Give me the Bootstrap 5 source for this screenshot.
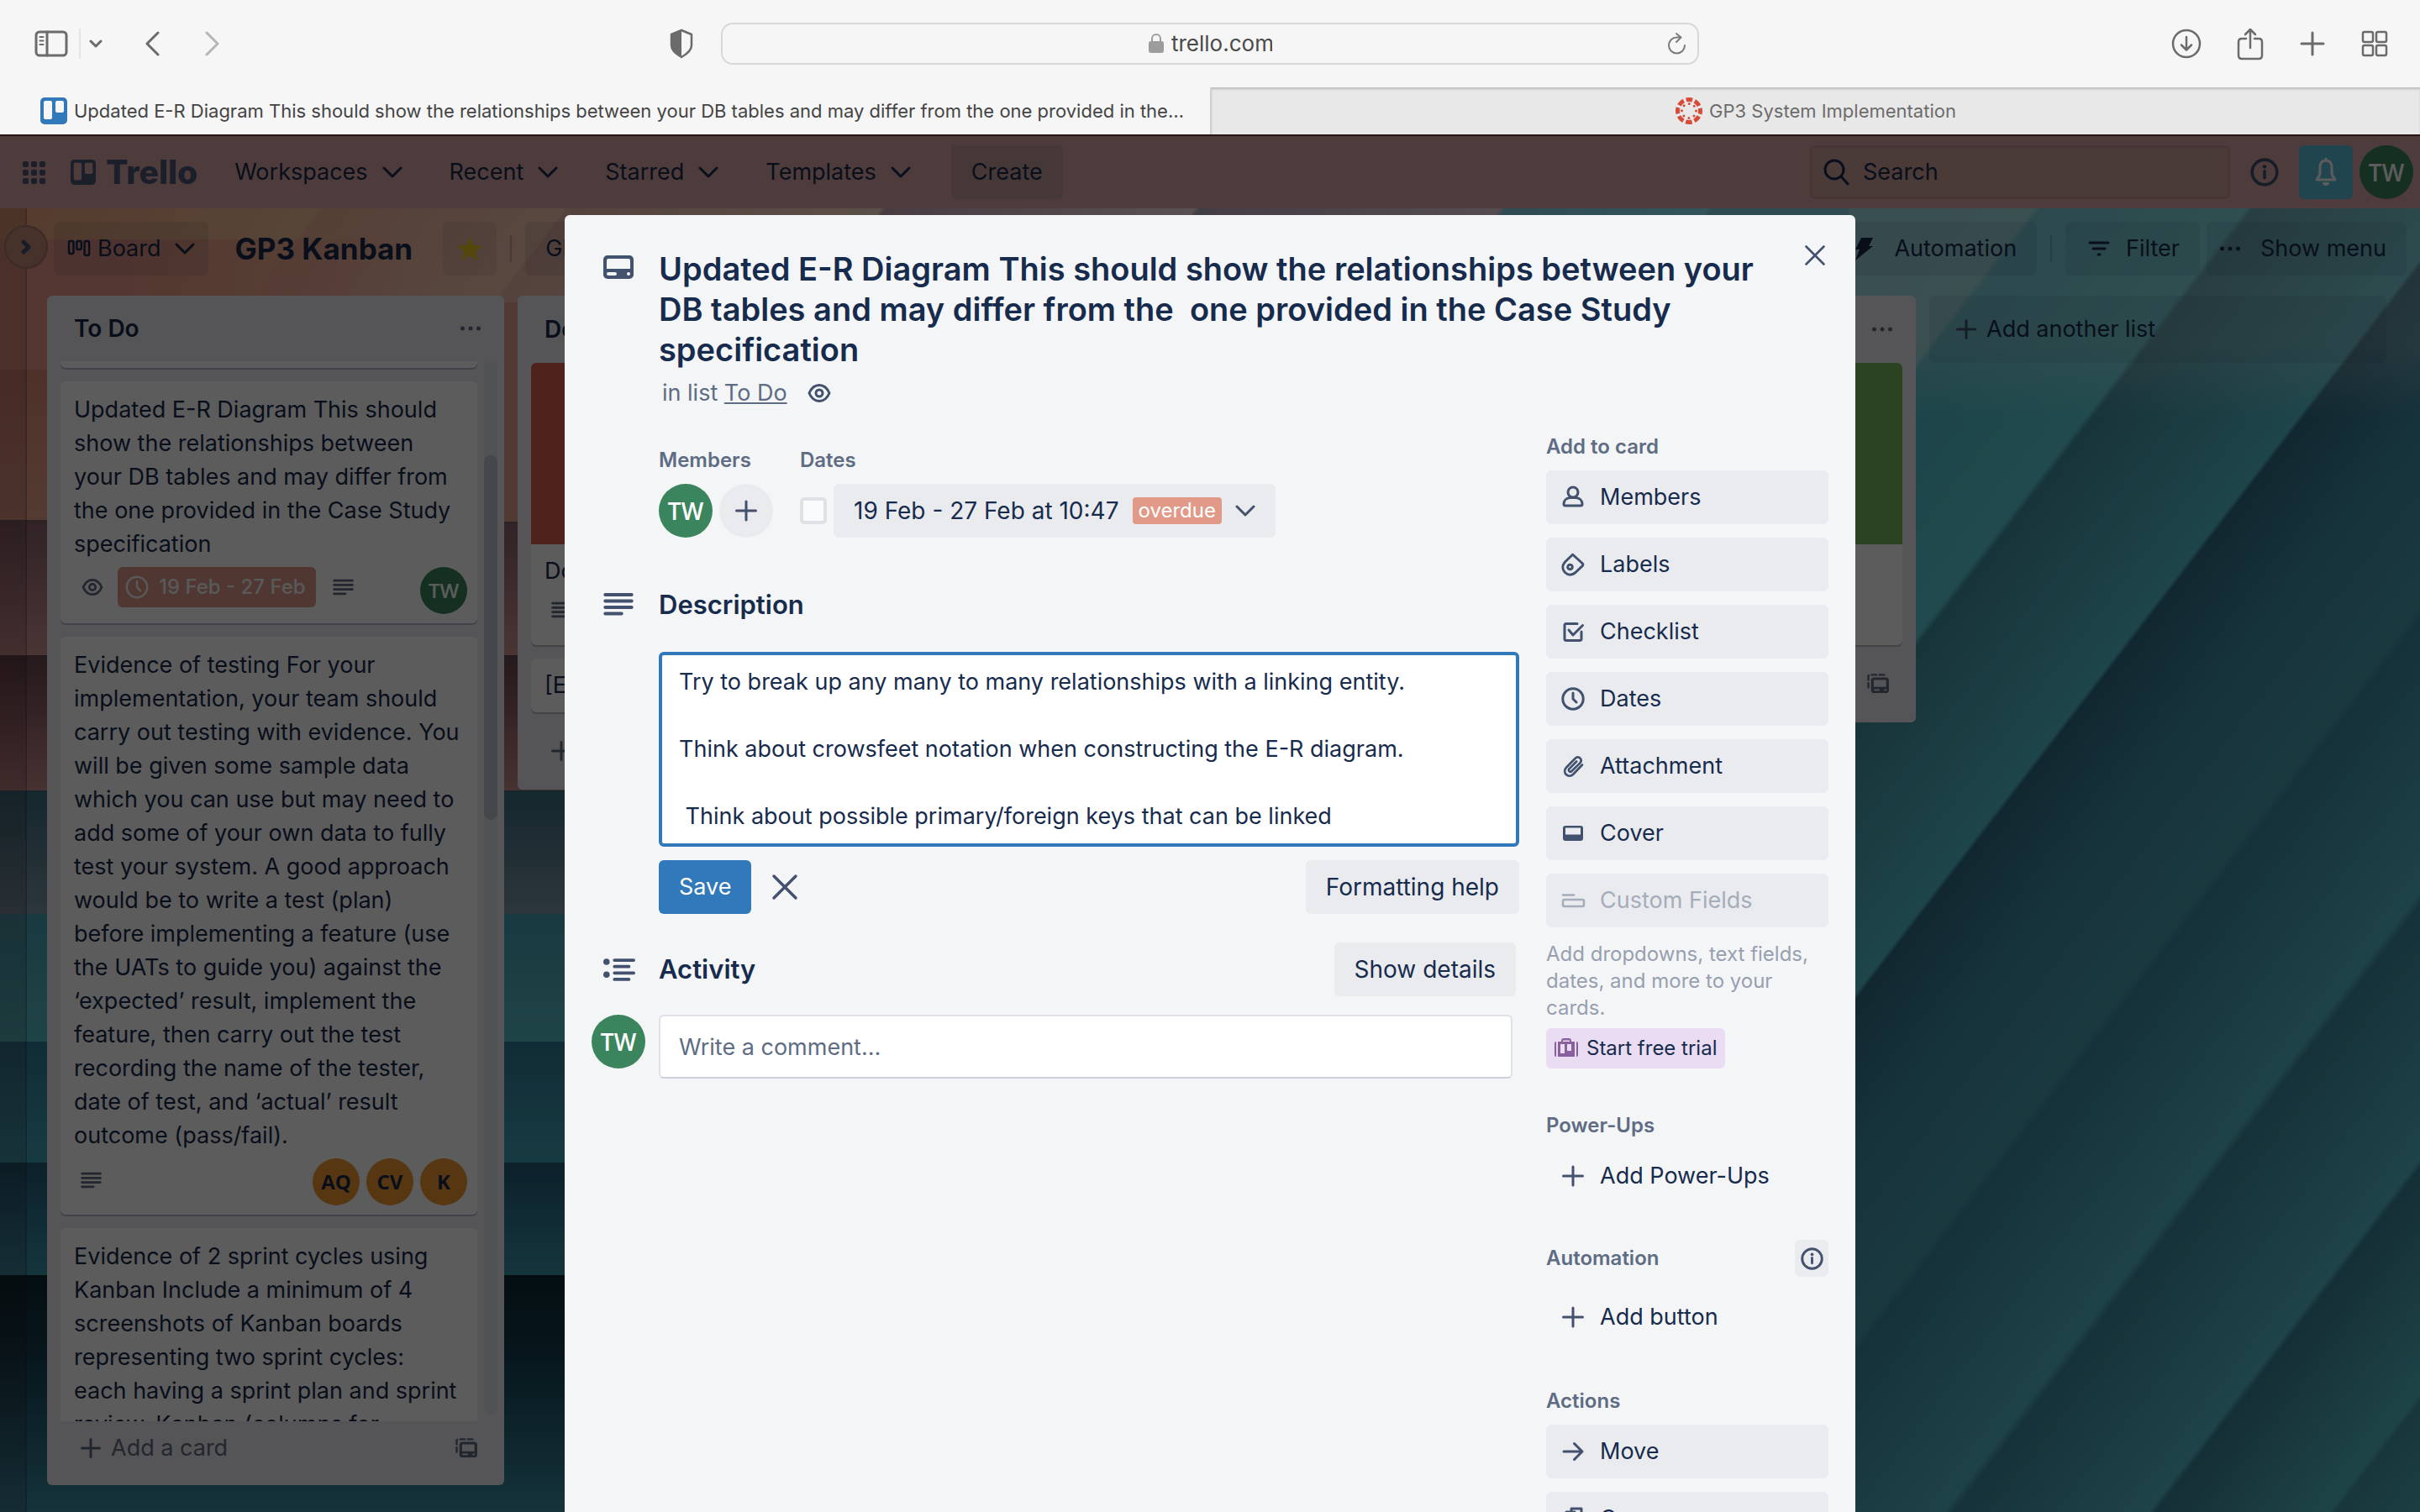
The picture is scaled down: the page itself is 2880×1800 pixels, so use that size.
<!DOCTYPE html>
<html lang="en">
<head>
<meta charset="utf-8">
<meta name="viewport" content="width=device-width, initial-scale=1">
<title>GP3 Kanban | Trello</title>
<link href="https://cdn.jsdelivr.net/npm/bootstrap@5.3.0/dist/css/bootstrap.min.css" rel="stylesheet">
<style>
  :root { --ink:#172b4d; --slate:#42526e; --muted:#5e6c84; --soft:#eaebef; --blue:#3179ba; }
  body { font-family:Inter,"Liberation Sans",sans-serif; font-size:27px; line-height:40px; color:var(--ink); }
  svg { display:block; flex:none; fill:none; stroke:currentColor; stroke-width:3; stroke-linecap:round; stroke-linejoin:round; }
  svg.solid, .solid { fill:currentColor; stroke:none; }
  svg.thin { stroke-width:2.5; }
  svg.bold { stroke-width:5; }
  button, input, textarea { font:inherit; color:inherit; border:0; background:none; padding:0; }
  input:focus, textarea:focus { outline:0; }
  a { color:inherit; text-decoration:none; }

  /* browser window */
  .chrome { background:#f6f6f6; color:#6b6b6b; }
  .toolbar-grid { display:grid; grid-template-columns:858fr 1164fr 858fr; height:104px; align-items:center; }
  .tools-left { padding-left:41px; }
  .tools-right { padding-right:36px; }
  .sep { width:2px; height:36px; background:#e4e4e4; margin:0 10px 0 13px; }
  .nav-back { margin-left:50px; }
  .nav-next { margin-left:54px; color:#b5b5b5; }
  .address { height:50px; border:2px solid #d8d8d8; border-radius:14px; color:#4a4a4a; font-size:26px; }
  .address input { width:120px; }
  .tabstrip { height:56px; font-size:22px; line-height:32px; }
  .tabstrip a { height:56px; min-width:0; white-space:nowrap; }
  .tab-on { color:#444; padding-left:48px; }
  .tab-off { background:#e8e8e8; color:#6c6c6c; border-left:2px solid #cfcfcf; box-shadow:inset 0 3px 3px -1px #b9b9b9; }
  .canvas-red { color:#d84a38; }

  /* app */
  .app { min-height:0; }
  .wallpaper { position:absolute; inset:0; width:100%; height:100%; stroke:none; }
  .topbar { height:88px; background:#d6a7a4; border-top:2px solid #6a4538; }
  .topmenu { gap:32px; }
  .topmenu button { height:64px; padding:0 12px; gap:17px; }
  .create { height:64px; margin-left:36px; }
  .wordmark { font-weight:800; font-size:39px; color:#495673; line-height:40px; }
  .tint { background:rgba(9,30,66,.08); border-radius:6px; }
  .search { width:500px; height:64px; border:3px solid rgba(9,30,66,.08); border-radius:6px; background:rgba(60,60,20,.06); }
  .bell { width:64px; height:64px; background:#5bc0dc; border-radius:6px; color:#fff; }
  .avatar { width:64px; height:64px; border-radius:50%; background:#3a855d; color:#fff; font-family:"Open Sans",sans-serif; font-weight:600; font-size:28px; display:flex; align-items:center; justify-content:center; flex:none; }
  .avatar.tiny { width:56px; height:56px; font-size:24px; }
  .avatar.amber { background:#f2982f; color:var(--ink); font-weight:700; }
  .rail { width:32px; border-right:2px solid rgba(9,30,66,.2); background:rgba(60,10,10,.14); flex:none; }
  .rail-btn { position:absolute; left:5px; top:20px; width:52px; height:52px; border-radius:50%; background:#c48877; border:2px solid #a7756a; color:var(--slate); }
  .board-name { font-size:35px; font-weight:700; line-height:48px; }
  .bbtn { height:64px; }
  .bar { width:2px; height:32px; background:rgba(9,30,66,.2); }
  .list-col { width:544px; background:#ebecf0; border-radius:6px; flex:none; }
  .list-head { height:80px; padding:0 28px 0 32px; font-weight:600; font-size:28px; }
  .list-body { padding:0 16px; gap:16px; }
  .scroll-cards { width:496px; }
  .tcard { background:#fff; border-radius:6px; box-shadow:0 2px 0 rgba(9,30,66,.25); padding:14px 16px 0; }
  .tcard.short { height:64px; padding-top:12px; }
  .tcard.covered { height:336px; padding:0; }
  .covered-text { padding:12px 16px 0; }
  .tstub { height:8px; background:#fff; border-radius:0 0 6px 6px; box-shadow:0 2px 0 rgba(9,30,66,.25); }
  .badges { height:74px; padding-top:7px; margin-right:-4px; }
  .due { height:48px; border-radius:6px; background:#df988a; color:#f4f5f7; padding:0 12px 0 9px; font-size:24px; gap:12px; font-weight:500; }
  .faint { color:var(--muted); }
  .track { width:16px; border-radius:8px; background:#e1e3e8; margin-bottom:8px; padding-top:112px; }
  .thumb { height:434px; border-radius:8px; background:#c1c6d0; }
  .list-foot { height:76px; padding:0 32px 12px 40px; }
  .list-foot.tall { height:92px; padding-bottom:0; }
  .plus-gap { gap:12px; }
  .add-list { height:80px; margin-right:40px; }
  .cover { height:216px; border-radius:6px 6px 0 0; }
  .cover.red { background:#d4614b; }
  .cover.green { background:#7bbb60; }

  /* card dialog */
  .shade { position:absolute; inset:0; background:rgba(0,0,0,.64); overflow:hidden; }
  .card-dialog { width:1536px; min-height:100%; margin:96px auto 0; background:#f4f5f7; border-radius:6px; padding:40px 32px 0 40px; position:relative; }
  .dlg-close { position:absolute; right:34px; top:34px; color:var(--slate); }
  .dlg-title { font-size:38px; line-height:48px; font-weight:600; white-space:pre-wrap; margin:0; padding-right:84px; }
  .lead-col { width:72px; flex:none; padding-left:6px; color:var(--slate); }
  .indent { margin-left:72px; }
  .slate { color:var(--slate); }
  .sub { font-size:24px; font-weight:600; color:var(--muted); line-height:40px; margin:0 0 8px; }
  .h-mod { font-size:31px; line-height:40px; font-weight:600; margin:0; }
  .main-col { padding-top:40px; }
  .mod-head { height:64px; }
  .activity-head { margin-top:34px; padding-right:4px; }
  .comment-row { margin:22px 8px 0 -8px; gap:16px; }
  .soft { background:var(--soft); border-radius:6px; height:64px; padding:0 24px; font-size:28px; }
  .add-round { width:64px; height:64px; border-radius:50%; background:var(--soft); }
  .tick { appearance:none; width:32px; height:32px; background:#fafbfc; border:4px solid #dfe1e6; border-radius:5px; margin:0; }
  .overdue { background:#e19a88; color:#fff; font-size:24px; line-height:32px; padding:0 7px; border-radius:4px; }
  .desc { display:block; width:100%; height:232px; border:4px solid var(--blue); border-radius:6px; background:#fff; padding:12px 20px; resize:none; overflow:hidden; }
  .save { background:var(--blue); color:#fff; height:64px; padding:0 24px; border-radius:6px; }
  .comment { height:76px; background:#fff; border:2px solid #dfe1e6; border-bottom-color:#cdd1dc; border-radius:6px; padding:0 22px; width:100%; }
  .comment::placeholder { color:var(--muted); opacity:1; }
  .side { width:336px; margin-left:32px; flex:none; padding-top:24px; }
  .side-btn { height:64px; width:100%; border-radius:6px; background:var(--soft); padding:0 16px; gap:16px; margin-bottom:16px; text-align:left; }
  .side-btn svg { color:var(--slate); }
  .side-btn.plain { background:none; }
  .side-btn:disabled { color:#a5adba; }
  .side-btn:disabled svg { color:#a5adba; }
  .side-row { margin:44px 0 16px; }
  .hint { font-size:24px; line-height:32px; color:#97a0af; margin:0 0 8px; }
  .trial { height:48px; background:#eadcf2; border-radius:6px; font-size:24px; padding:0 10px; gap:10px; }
  .trial svg { color:#89609e; }
  .info-btn { width:40px; height:44px; background:var(--soft); border-radius:6px; color:var(--slate); }
</style>
</head>
<body class="vh-100 overflow-hidden d-flex flex-column">

<svg width="0" height="0" class="position-absolute" aria-hidden="true">
  <symbol id="chev" viewBox="0 0 24 16"><path d="M2 3l10 10L22 3"/></symbol>
  <symbol id="plus" viewBox="0 0 48 48"><path d="M24 13v22M12.500 24h23"/></symbol>
  <symbol id="add" viewBox="0 0 24 24"><path d="M12 1.500v21M1.500 12h21"/></symbol>
  <symbol id="cross" viewBox="0 0 32 32"><path d="M4 4l24 24M28 4L4 28"/></symbol>
  <symbol id="dots" viewBox="0 0 24 8"><g class="solid"><circle cx="2.500" cy="4" r="2.500"/><circle cx="12" cy="4" r="2.500"/><circle cx="21.500" cy="4" r="2.500"/></g></symbol>
  <symbol id="lines" viewBox="0 0 24 20"><path stroke-width="2.600" d="M1.500 2h21M1.500 7h21M1.500 12h21M1.500 17h13"/></symbol>
  <symbol id="eye" viewBox="0 0 28 24"><path d="M2 12C5 5 9 2.500 14 2.500S23 5 26 12c-3 7-7 9.500-12 9.500S5 19 2 12z"/><circle cx="14" cy="12" r="4"/></symbol>
  <symbol id="clock" viewBox="0 0 28 28"><circle cx="14" cy="14" r="12.200"/><path d="M14 7v7l4 4"/></symbol>
  <symbol id="info" viewBox="0 0 28 28"><circle cx="14" cy="14" r="12.200"/><path d="M14 13v6.500"/><circle cx="14" cy="8.600" r="1.900" class="solid"/></symbol>
  <symbol id="cardy" viewBox="0 0 36 28"><path class="solid" fill-rule="evenodd" d="M5 0h26a5 5 0 0 1 5 5v18a5 5 0 0 1-5 5H5a5 5 0 0 1-5-5V5a5 5 0 0 1 5-5zM6 4Q4 4 4 6v10h28V6q0-2-2-2zM6 20a2 2 0 0 0 0 4h8a2 2 0 0 0 0-4zM30 20a2 2 0 0 0 0 4a2 2 0 0 0 0-4z"/></symbol>
  <symbol id="tmpl" viewBox="0 0 28 26"><path stroke-width="2.600" stroke-dasharray="6 4" d="M1.500 18V4Q1.500 1.500 4 1.500H24"/><path class="solid" fill-rule="evenodd" d="M9 5h15a4 4 0 0 1 4 4v12a4 4 0 0 1-4 4H9a4 4 0 0 1-4-4V9a4 4 0 0 1 4-4zM8.500 8v9h16V8zM9 20v2h7v-2zM22 20v2h3v-2z"/></symbol>
  <symbol id="logo" viewBox="0 0 32 32"><path class="solid" fill-rule="evenodd" d="M5 0h22a5 5 0 0 1 5 5v22a5 5 0 0 1-5 5H5a5 5 0 0 1-5-5V5a5 5 0 0 1 5-5zM6 4q-2 0-2 2v18q0 2 2 2h6q2 0 2-2V6q0-2-2-2zM20 4q-2 0-2 2v10q0 2 2 2h6q2 0 2-2V6q0-2-2-2z"/></symbol>
</svg>

<!-- browser window -->
<header class="chrome">
  <div class="toolbar-grid">
    <div class="d-flex align-items-center tools-left">
      <button aria-label="Sidebar"><svg width="40" height="32" viewBox="0 0 40 32"><rect x="2" y="2" width="36" height="28" rx="4"/><path d="M15 2v28"/><path stroke-width="2" d="M6.500 8h4M6.500 12.500h4M6.500 17h4"/></svg></button>
      <span class="sep"></span>
      <button aria-label="Tab groups"><svg width="16" height="12" viewBox="0 0 16 12"><path d="M2 3l6 6 6-6"/></svg></button>
      <button class="nav-back" aria-label="Back"><svg width="18" height="32" viewBox="0 0 18 32"><path d="M16 3L3 16l13 13"/></svg></button>
      <button class="nav-next" aria-label="Forward"><svg width="18" height="32" viewBox="0 0 18 32"><path d="M2 3l13 13L2 29"/></svg></button>
      <button class="ms-auto me-4 pe-2" aria-label="Privacy report"><svg width="30" height="36" viewBox="0 0 30 36"><path stroke-width="2.500" d="M15 2l12 5v13c0 6-5 10-12 14C8 30 3 26 3 20V7z"/><path class="solid" d="M15 2v32C8 30 3 26 3 20V7z"/></svg></button>
    </div>
    <form class="address d-flex align-items-center position-relative justify-content-center">
      <svg class="solid me-2" width="20" height="26" viewBox="0 0 20 26" style="color:#9c9c9c"><rect x="1" y="10" width="18" height="14" rx="3"/><path fill="none" stroke="#9c9c9c" stroke-width="2" d="M5 11V7a5 5 0 0 1 10 0v4"/></svg>
      <input value="trello.com" aria-label="Address">
      <button type="button" class="position-absolute end-0 me-2 pe-1" aria-label="Reload"><svg width="24" height="28" viewBox="0 0 24 28"><path stroke="#7b7b7b" stroke-width="2" d="M21 16a9.500 9.500 0 1 1-9.500-9.500H16M11 2l5.500 4.500L11 12"/></svg></button>
    </form>
    <div class="d-flex align-items-center justify-content-end tools-right">
      <button aria-label="Downloads"><svg class="thin" width="36" height="36" viewBox="0 0 36 36"><circle cx="18" cy="18" r="16"/><path d="M18 10v15M12 19.500l6 6 6-6"/></svg></button>
      <button class="ms-4 ps-3" aria-label="Share"><svg class="thin" width="36" height="40" viewBox="0 0 36 40"><path d="M13 14H8q-4 0-4 4v16q0 4 4 4h20q4 0 4-4V18q0-4-4-4h-5M18 25V4M12 9l6-6 6 6"/></svg></button>
      <button class="ms-4 ps-3" aria-label="New tab"><svg width="32" height="32" viewBox="0 0 32 32"><path d="M16 3v26M3 16h26"/></svg></button>
      <button class="ms-4 ps-3" aria-label="Tab overview"><svg class="thin" width="36" height="34" viewBox="0 0 36 34"><rect x="4" y="3" width="12" height="12" rx="2"/><rect x="20" y="3" width="12" height="12" rx="2"/><rect x="4" y="19" width="12" height="12" rx="2"/><rect x="20" y="19" width="12" height="12" rx="2"/></svg></button>
    </div>
  </div>
  <nav class="tabstrip d-flex">
    <a href="#" class="tab-on w-50 d-flex align-items-center"><svg width="32" height="32" style="color:#3179ba" class="me-2"><use href="#logo"/></svg><span>Updated E-R Diagram This should show the relationships between your DB tables and may differ from the one provided in the…</span></a>
    <a href="#" class="tab-off w-50 d-flex align-items-center justify-content-center"><svg width="32" height="32" viewBox="0 0 32 32" class="me-2 canvas-red"><circle cx="16" cy="16" r="13.500" stroke-width="5" stroke-dasharray="7.600 3" stroke-dashoffset="3.800" stroke-linecap="butt"/><circle cx="16" cy="16" r="8.500" stroke-width="3" stroke-dasharray="0 6.676"/></svg><span>GP3 System Implementation</span></a>
  </nav>
</header>

<div class="app flex-grow-1 position-relative d-flex flex-column overflow-hidden">
  <!-- canyon wallpaper: slanted walls with flat strata on the left -->
  <svg class="wallpaper" viewBox="0 160 2880 1640" preserveAspectRatio="xMinYMin slice" aria-hidden="true">
    <defs>
      <linearGradient id="walls" gradientUnits="userSpaceOnUse" x1="0" y1="0" x2="2696" y2="2071">
        <stop offset=".04" stop-color="#e9a17a"/><stop offset=".133" stop-color="#f2c09c"/><stop offset=".1345" stop-color="#ecb096"/>
        <stop offset=".2012" stop-color="#f4c8b0"/><stop offset=".2022" stop-color="#e8b6a8"/><stop offset=".289" stop-color="#fbdcc8"/>
        <stop offset=".2905" stop-color="#c8a7b7"/><stop offset=".376" stop-color="#f4dee4"/><stop offset=".3775" stop-color="#b7acbd"/>
        <stop offset=".461" stop-color="#e9d3de"/><stop offset=".4625" stop-color="#85cee4"/><stop offset=".5185" stop-color="#8be9fa"/>
        <stop offset=".52" stop-color="#80d0de"/><stop offset=".609" stop-color="#88d2d8"/>
        <stop offset=".611" stop-color="#50bcc8"/><stop offset=".668" stop-color="#5aced6"/>
        <stop offset=".67" stop-color="#42909f"/><stop offset=".727" stop-color="#53c0cc"/>
        <stop offset=".7285" stop-color="#316e84"/><stop offset=".76" stop-color="#3e8aa2"/><stop offset=".801" stop-color="#4a9fb0"/>
        <stop offset=".804" stop-color="#3c88a0"/><stop offset=".862" stop-color="#53b8c4"/>
        <stop offset=".865" stop-color="#3f8a9e"/><stop offset=".919" stop-color="#53baca"/>
        <stop offset=".921" stop-color="#3b8294"/><stop offset=".969" stop-color="#53bcc6"/>
        <stop offset=".971" stop-color="#4396a6"/><stop offset="1" stop-color="#4eb4be"/>
      </linearGradient>
      <linearGradient id="strata" x1="0" y1="0" x2="0" y2="1">
        <stop offset="0" stop-color="#d88a74"/><stop offset=".1316" stop-color="#e8a48c"/>
        <stop offset=".1316" stop-color="#84606a"/><stop offset=".25" stop-color="#cf9494"/>
        <stop offset=".25" stop-color="#684650"/><stop offset=".3684" stop-color="#c68a8a"/>
        <stop offset=".3684" stop-color="#3a6e7e"/><stop offset=".4765" stop-color="#7c96a8"/>
        <stop offset=".4765" stop-color="#46a0b0"/><stop offset=".5882" stop-color="#56bcc6"/>
        <stop offset=".5882" stop-color="#307a94"/><stop offset=".6941" stop-color="#42a4b8"/>
        <stop offset=".6941" stop-color="#225a74"/><stop offset=".7926" stop-color="#3c94aa"/>
        <stop offset=".7926" stop-color="#0b2830"/><stop offset=".86" stop-color="#143e4e"/><stop offset="1" stop-color="#3c8ea6"/>
      </linearGradient>
      <linearGradient id="blush" x1="0" y1="0" x2="1" y2="0"><stop offset=".3" stop-color="#e89a88"/><stop offset="1" stop-color="#e89a88" stop-opacity="0"/></linearGradient>
      <linearGradient id="haze" x1="0" y1="0" x2="0" y2="1"><stop offset=".65" stop-color="#fff" stop-opacity=".24"/><stop offset="1" stop-color="#fff" stop-opacity="0"/></linearGradient>
    </defs>
    <rect x="0" y="160" width="2880" height="1640" fill="url(#walls)"/>
    <path d="M0 285H500V440H0z" fill="url(#blush)"/>
    <rect x="0" y="440" width="700" height="1360" fill="url(#strata)"/>
    <path d="M600 360H700V621H600z" fill="#e4a090"/>
    <rect x="2200" y="248" width="680" height="250" fill="url(#haze)"/>
  </svg>

  <div class="position-relative flex-grow-1 d-flex flex-column app">
    <nav class="topbar d-flex align-items-center ps-4 pe-2 flex-shrink-0">
      <button aria-label="Apps"><svg class="solid" width="32" height="32" viewBox="0 0 32 32" style="color:#495673"><g id="r"><rect x="3" y="3" width="7" height="7" rx="2"/><rect x="13" y="3" width="7" height="7" rx="2"/><rect x="23" y="3" width="7" height="7" rx="2"/></g><use href="#r" y="10"/><use href="#r" y="20"/></svg></button>
      <a href="#" class="d-flex align-items-center gap-2 wordmark ms-4 ps-1 me-4 pe-2"><svg width="30" height="30" class="me-1"><use href="#logo"/></svg>Trello</a>
      <div class="topmenu d-flex">
        <button class="d-flex align-items-center">Workspaces <svg width="24" height="16"><use href="#chev"/></svg></button>
        <button class="d-flex align-items-center">Recent <svg width="24" height="16"><use href="#chev"/></svg></button>
        <button class="d-flex align-items-center">Starred <svg width="24" height="16"><use href="#chev"/></svg></button>
        <button class="d-flex align-items-center">Templates <svg width="24" height="16"><use href="#chev"/></svg></button>
      </div>
      <button class="tint create px-4">Create</button>
      <label class="search d-flex align-items-center ms-auto ps-2"><svg class="ms-1 me-3" width="32" height="32" viewBox="0 0 32 32"><circle cx="14" cy="13" r="11"/><path d="M22 21l8 9"/></svg><input class="w-75" value="Search" aria-label="Search"></label>
      <button class="slate ms-4 me-4" aria-label="Information"><svg width="34" height="34"><use href="#info"/></svg></button>
      <button aria-label="Notifications" class="bell d-flex align-items-center justify-content-center me-2"><svg width="28" height="36" viewBox="0 0 28 36"><path d="M14 4c-5 0-7 4-7 8v7c0 3-2 5-4 8h22c-2-3-4-5-4-8v-7c0-4-2-8-7-8zM14 3V2"/><path class="solid" d="M10 30h8a4 4 0 0 1-8 0z"/></svg></button>
      <span class="avatar">TW</span>
    </nav>

    <div class="d-flex flex-grow-1 position-relative app">
      <div class="rail"></div>
      <button class="rail-btn d-flex align-items-center justify-content-center" aria-label="Open sidebar"><svg class="bold" width="14" height="20" viewBox="0 0 14 20"><path d="M4 4l6 6-6 6"/></svg></button>
      <main class="flex-grow-1 d-flex flex-column" style="min-width:0">
        <div class="d-flex align-items-center pt-3 pe-3 ms-4 ps-2">
          <button class="tint bbtn d-flex align-items-center px-3"><svg width="28" height="24" viewBox="0 0 28 24" class="me-2 thin"><rect x="2" y="3" width="5.500" height="15" rx="2"/><rect x="11.300" y="3" width="5.500" height="10" rx="2"/><rect x="20.600" y="3" width="5.500" height="17" rx="2"/></svg><span class="me-3">Board</span><svg width="24" height="16"><use href="#chev"/></svg></button>
          <h1 class="board-name mb-0 mx-4 px-2">GP3 Kanban</h1>
          <button class="tint bbtn px-3 ms-1" aria-label="Star" style="color:#e8c51c"><svg class="solid" width="32" height="32" viewBox="0 0 32 32"><path d="M16 2l4 10 11 .5-8.500 7L25.500 30 16 24l-9.500 6 3-10.500-8.500-7L12 12z"/></svg></button>
          <span class="bar mx-3"></span>
          <button class="tint bbtn px-4">GP3 Group</button>
          <button class="tint bbtn d-flex align-items-center px-4 ms-auto"><svg class="solid me-4" width="24" height="32" viewBox="0 0 24 32"><path d="M9 3h14l-5 10h5L2 30l5-13H2z"/></svg>Automation</button>
          <span class="bar mx-3"></span>
          <button class="tint bbtn d-flex align-items-center px-4"><svg class="me-3" width="32" height="24" viewBox="0 0 32 24"><path d="M5 5h22M9 12h14M15 19h2"/></svg>Filter</button>
          <button class="tint bbtn d-flex align-items-center ps-3 pe-4 ms-2"><svg class="me-4" width="24" height="8"><use href="#dots"/></svg>Show menu</button>
        </div>

        <div class="d-flex align-items-start flex-grow-1 gap-3 mt-4 ms-4 pb-4 mb-2 app">
          <section class="list-col d-flex flex-column h-100">
            <div class="list-head d-flex align-items-center justify-content-between">To Do <svg class="faint" width="24" height="8"><use href="#dots"/></svg></div>
            <div class="list-body d-flex flex-grow-1 pe-2 gap-2 app">
              <div class="scroll-cards d-flex flex-column gap-3 overflow-hidden">
                <div class="tstub flex-shrink-0"></div>
                <article class="tcard flex-shrink-0">Updated E-R Diagram This should show the relationships between your DB tables and may differ from the one provided in the Case Study specification
                  <div class="badges d-flex align-items-start faint">
                    <div class="d-flex align-items-center"><svg class="ms-2" width="28" height="22"><use href="#eye"/></svg><span class="due d-flex align-items-center ms-3 me-3"><svg class="thin" width="28" height="28"><use href="#clock"/></svg>19 Feb - 27 Feb</span><svg class="ms-1" width="25" height="21"><use href="#lines"/></svg></div>
                    <span class="avatar tiny ms-auto">TW</span>
                  </div>
                </article>
                <article class="tcard flex-shrink-0">Evidence of testing For your implementation, your team should carry out testing with evidence. You will be given some sample data which you can use but may need to add some of your own data to fully test your system. A good approach would be to write a test (plan) before implementing a feature (use the UATs to guide you) against the ‘expected’ result, implement the feature, then carry out the test recording the name of the tester, date of test, and ‘actual’ result outcome (pass/fail).
                  <div class="badges d-flex align-items-start faint">
                    <svg class="mt-3 ms-2" width="25" height="21"><use href="#lines"/></svg>
                    <span class="d-flex gap-2 ms-auto"><span class="avatar tiny amber">AQ</span><span class="avatar tiny amber">CV</span><span class="avatar tiny amber">K</span></span>
                  </div>
                </article>
                <article class="tcard flex-shrink-0">Evidence of 2 sprint cycles using Kanban Include a minimum of 4 screenshots of Kanban boards representing two sprint cycles:<br>each having a sprint plan and sprint review. Kanban (columns for</article>
              </div>
              <div class="track"><div class="thumb"></div></div>
            </div>
            <div class="list-foot d-flex align-items-center faint flex-shrink-0"><button class="d-flex align-items-center plus-gap"><svg width="24" height="24"><use href="#add"/></svg>Add a card</button><svg class="ms-auto" width="26" height="24"><use href="#tmpl"/></svg></div>
          </section>

          <section class="list-col">
            <div class="list-head d-flex align-items-center">Doing</div>
            <div class="list-body d-flex flex-column">
              <article class="tcard covered"><div class="cover red"></div><div class="covered-text">Doing<svg class="faint mt-3 ms-2" width="25" height="21"><use href="#lines"/></svg></div></article>
              <article class="tcard short">[Example task]</article>
            </div>
            <div class="list-foot tall d-flex align-items-center faint plus-gap"><svg width="24" height="24"><use href="#add"/></svg>Add</div>
          </section>
          <section class="list-col"></section>
          <section class="list-col">
            <div class="list-head d-flex align-items-center justify-content-end"><svg class="faint" width="24" height="8"><use href="#dots"/></svg></div>
            <div class="list-body d-flex flex-column"><article class="tcard covered"><div class="cover green"></div></article></div>
            <div class="list-foot tall d-flex align-items-center faint"><svg class="ms-auto" width="26" height="24"><use href="#tmpl"/></svg></div>
          </section>
          <button class="tint add-list d-flex align-items-center ps-4 plus-gap flex-grow-1"><svg class="ms-2 slate" width="24" height="24"><use href="#add"/></svg>Add another list</button>
        </div>
      </main>
    </div>
  </div>

  <!-- open card -->
  <div class="shade">
    <section class="card-dialog" role="dialog" aria-label="Card details">
      <button class="dlg-close" aria-label="Close"><svg width="28" height="28"><use href="#cross"/></svg></button>
      <div class="d-flex">
        <div class="lead-col pt-2"><svg width="36" height="28"><use href="#cardy"/></svg></div>
        <div>
          <h2 class="dlg-title">Updated E-R Diagram This should show the relationships between your DB tables and may differ from the  one provided in the Case Study specification</h2>
          <div class="d-flex align-items-center mt-2 ps-1" style="color:#5e6c84"><span>in list <a href="#" class="text-decoration-underline">To Do</a></span><svg class="slate ms-4" width="28" height="24"><use href="#eye"/></svg></div>
        </div>
      </div>

      <div class="d-flex">
        <div class="main-col flex-grow-1">
          <div class="d-flex indent">
            <div class="me-3 pe-3"><h3 class="sub">Members</h3><div class="d-flex gap-2"><span class="avatar">TW</span><button class="add-round slate d-flex align-items-center justify-content-center" aria-label="Add member"><svg width="48" height="48"><use href="#plus"/></svg></button></div></div>
            <div><h3 class="sub">Dates</h3><div class="d-flex align-items-center gap-2"><input type="checkbox" class="tick" aria-label="Mark complete"><button class="soft d-flex align-items-center"><span class="me-3">19 Feb - 27 Feb at 10:47</span><span class="overdue me-3">overdue</span><svg class="slate" width="24" height="16"><use href="#chev"/></svg></button></div></div>
          </div>

          <div class="mod-head d-flex align-items-center mt-5"><div class="lead-col"><svg width="36" height="30"><use href="#lines"/></svg></div><h3 class="h-mod">Description</h3></div>
          <div class="mt-4 indent">
            <textarea class="desc" aria-label="Description">Try to break up any many to many relationships with a linking entity.

Think about crowsfeet notation when constructing the E-R diagram.

 Think about possible primary/foreign keys that can be linked</textarea>
            <div class="d-flex align-items-center mt-3"><button class="save">Save</button><button class="slate ms-4" aria-label="Cancel"><svg width="32" height="32" viewBox="0 0 32 32"><path d="M3 3l26 26M29 3L3 29" stroke-width="3.500"/></svg></button><button class="soft ms-auto">Formatting help</button></div>
          </div>

          <div class="activity-head d-flex align-items-center"><div class="lead-col"><svg width="38" height="29" viewBox="0 0 40 30"><path stroke-width="4" d="M14 3h24M14 11h18M14 19h24M14 27h18"/><g class="solid"><circle cx="4" cy="5" r="4"/><circle cx="4" cy="21" r="4"/></g></svg></div><h3 class="h-mod">Activity</h3><button class="soft ms-auto">Show details</button></div>
          <div class="comment-row d-flex align-items-start"><span class="avatar">TW</span><input class="comment" placeholder="Write a comment…" aria-label="Write a comment"></div>
        </div>

        <aside class="side">
          <h3 class="sub">Add to card</h3>
          <button class="side-btn d-flex align-items-center"><svg width="32" height="32" viewBox="0 0 32 32"><circle cx="16" cy="10" r="6"/><path d="M5 24c0-4 3-7 7-7.500h8c4 .5 7 3.500 7 7.500q0 2-2 2H7q-2 0-2-2z"/></svg>Members</button>
          <button class="side-btn d-flex align-items-center"><svg width="32" height="32" viewBox="0 0 32 32"><path d="M16 4.500L27.500 15q1 1.200 0 2.400L19 25.500c-4 3.500-9 3.500-12.500 0s-3.500-8.500 0-12.500L15 4.700q.5-.6 1-.2z"/><circle cx="12.500" cy="19" r="2.800"/></svg>Labels</button>
          <button class="side-btn d-flex align-items-center"><svg width="32" height="32" viewBox="0 0 32 32"><path d="M21 6.500H8Q6 6.500 6 8.500v16q0 2 2 2h16q2 0 2-2V16M11 14l5 6L27.500 8.500"/></svg>Checklist</button>
          <button class="side-btn d-flex align-items-center"><svg width="32" height="32" viewBox="-2 -2 32 32"><use href="#clock" width="28" height="28"/></svg>Dates</button>
          <button class="side-btn d-flex align-items-center"><svg width="32" height="32" viewBox="0 0 32 32"><path stroke-width="2.700" d="M27 14.500L16.500 25.500c-3 3-6.500 2.700-8.700.5s-2.300-5.800.6-8.700L18.500 7c2-2 4.500-2 6-.4s1.500 4-.4 6L14.500 22c-1 1-2.200.9-3 .1s-.9-2 .2-3l8.500-8.600"/></svg>Attachment</button>
          <button class="side-btn d-flex align-items-center"><svg class="solid" width="32" height="32" viewBox="0 0 32 32"><path fill-rule="evenodd" d="M7 7h18a3 3 0 0 1 3 3v12a3 3 0 0 1-3 3H7a3 3 0 0 1-3-3V10a3 3 0 0 1 3-3zM7 9.500v8h18v-8z"/></svg>Cover</button>
          <button class="side-btn d-flex align-items-center" disabled><svg class="thin" width="32" height="32" viewBox="0 0 32 32"><path d="M4 9.500h13"/><rect x="4" y="15" width="25" height="8" rx="2"/></svg>Custom Fields</button>
          <p class="hint">Add dropdowns, text fields, dates, and more to your cards.</p>
          <button class="trial d-flex align-items-center"><svg width="28" height="26" viewBox="0 0 28 26" class="solid"><path fill-rule="evenodd" d="M0 7q0-2 2-2v18q-2 0-2-2zM26 5q2 0 2 2v14q0 2-2 2zM4 5h4V4q0-3 3-3h6q3 0 3 3v1h4v18H4zM10 5h8V3.500h-8zM7 8v11h5V8zM15 8v8h5V8z"/></svg>Start free trial</button>

          <h3 class="sub mt-5">Power-Ups</h3>
          <button class="side-btn plain d-flex align-items-center mb-0"><svg width="32" height="32" viewBox="8 8 32 32"><use href="#plus" width="48" height="48"/></svg>Add Power-Ups</button>
          <div class="side-row d-flex align-items-center justify-content-between"><h3 class="sub mb-0">Automation</h3><button class="info-btn d-flex align-items-center justify-content-center" aria-label="About automation"><svg width="27" height="27"><use href="#info"/></svg></button></div>
          <button class="side-btn plain d-flex align-items-center mb-0"><svg width="32" height="32" viewBox="8 8 32 32"><use href="#plus" width="48" height="48"/></svg>Add button</button>
          <h3 class="sub mt-5">Actions</h3>
          <button class="side-btn d-flex align-items-center"><svg width="32" height="32" viewBox="0 0 32 32"><path d="M5 16h22M17.500 6.500L27 16l-9.500 9.500"/></svg>Move</button>
          <button class="side-btn d-flex align-items-center"><svg width="32" height="32" viewBox="0 0 32 32"><path d="M20 24v4H8V8h10M14 4h12v20H14z"/></svg>Copy</button>
        </aside>
      </div>
    </section>
  </div>
</div>
<script src="https://cdn.jsdelivr.net/npm/bootstrap@5.3.0/dist/js/bootstrap.bundle.min.js"></script>
</body>
</html>
